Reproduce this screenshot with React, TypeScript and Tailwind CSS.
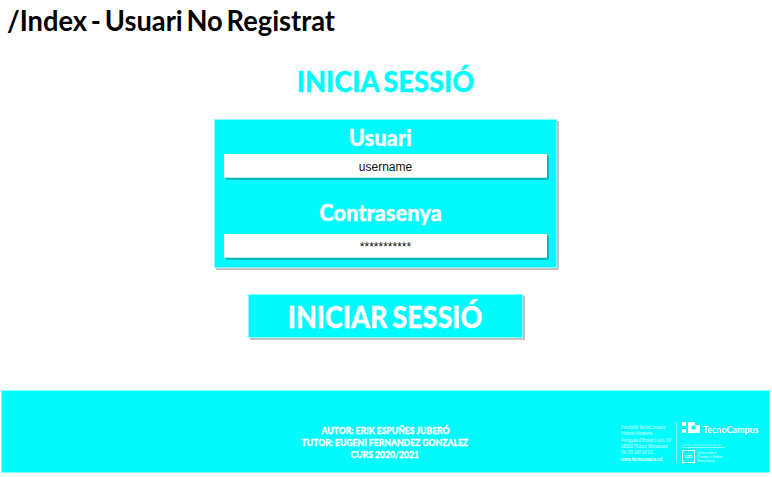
import React from "react";

const display = "block whitespace-nowrap font-['Lato',sans-serif]";

type FieldProps = { label: string; value: string; labelClass: string };

function Field({ label, value, labelClass }: FieldProps) {
  return (
    <div className="flex flex-col items-center">
      <label className={`${display} -ml-[10px] text-[23px] font-black text-white [-webkit-text-stroke:0.3px_white] ${labelClass}`}>{label}</label>
      <div className="flex h-6 w-[323px] justify-center border-b border-[#b0f0f2] bg-white text-[#111] shadow-[2px_2px_0_#00b9bd]">
        <span className="font-['Liberation_Sans',Arial,sans-serif] text-[12px] leading-[26px]">{value}</span>
      </div>
    </div>
  );
}

function TecnoCampus() {
  return (
    <div className="flex h-[41px] w-[140px] font-['Lato',sans-serif] text-white">
      <div className="w-[56px] shrink-0 border-r border-white/40 pt-[2px] text-[5px] leading-[6px] whitespace-nowrap text-white/80">
        <div className="flex origin-left scale-x-[.82] flex-col">
          <span className="tracking-[0.1px]">Fundació TecnoCampus</span>
          <span>Mataró-Maresme</span>
          <span className="mt-[1px]">Avinguda d'Ernest Lluch, 32</span>
          <span>08302 Mataró (Barcelona)</span>
          <span>Tel. 93 169 65 01</span>
          <span className="mt-[1px] font-bold text-white">www.tecnocampus.cat</span>
        </div>
      </div>
      <div className="ml-[5px] flex flex-col">
        <div className="flex h-[12px] items-start">
          <svg width="18" height="11" viewBox="0 0 18 11" fill="white">
            <path fillRule="evenodd" d="M0 0h4v4H0zM0 7h4v4H0zM6 0h7v3h5v8H6zM9.5 3.5v4h4v-4z" />
          </svg>
          <span className="ml-[3px] origin-left scale-x-[.94] text-[9.5px] leading-[16px] font-bold">TecnoCampus</span>
        </div>
        <div className="mt-[9px] h-[5px] w-[43px] border-b border-white/50 text-[3px] leading-[4px] whitespace-nowrap text-white/60">Centre universitari adscrit a la</div>
        <div className="mt-[2px] flex gap-[2px]">
          <div className="flex h-[13px] w-[13px] items-center justify-center border border-white text-[5px]">upf.</div>
          <div className="pt-[1px] text-[4px] leading-[4px] text-white/80">Universitat<br />Pompeu Fabra<br />Barcelona</div>
        </div>
      </div>
    </div>
  );
}

export default function App() {
  return (
    <main className="flex h-[477px] w-[772px] flex-col overflow-hidden bg-white">
      <h1 className={`${display} ml-[7px] h-[61px] text-[29px] leading-[40px] font-bold text-black`}><span className="inline-block origin-left scale-x-[.94] [word-spacing:-3px]">/Index - Usuari No Registrat</span></h1>
      <h2 className={`${display} h-[58px] self-center text-[29px] leading-[39px] font-black text-[#00fbff]`}><span className="inline-block scale-x-[.94] [word-spacing:-2px] [-webkit-text-stroke:0.3px_#00fbff]">INICIA SESSIÓ</span></h2>
      <section className="ml-[214px] flex h-[149px] w-[343px] flex-col border border-[#80fdff] bg-[#00fbff] shadow-[2px_2px_0_#c0c0c0]">
        <Field label="Usuari" value="username" labelClass="h-[34px] leading-[35px] scale-x-[.95]" />
        <Field label="Contrasenya" value="***********" labelClass="h-[56px] pt-[20px] leading-[28px] scale-x-[.95]" />
      </section>
      <button className={`${display} mt-[26px] ml-[248px] h-[44px] w-[275px] border border-[#80fdff] bg-[#00fbff] text-[30px] leading-[39px] font-black text-white shadow-[2px_2px_0_#c0c0c0]`}>
        <span className="inline-block scale-x-[.9] [word-spacing:-2px] [-webkit-text-stroke:0.3px_white]">INICIAR SESSIÓ</span>
      </button>
      <footer className="mt-[52px] ml-[1px] flex h-[83px] w-[769px] border border-[#80fdff] bg-[#00fbff]">
        <div className="ml-[283px] w-[200px] shrink-0 pt-[33px] text-center font-['Lato',sans-serif] text-[10px] leading-[12px] font-black whitespace-nowrap text-white">
          <p><span className="inline-block scale-x-[.86] [-webkit-text-stroke:0.3px_white]">AUTOR: ERIK ESPUÑES JUBERÓ</span></p>
          <p><span className="inline-block scale-x-[.86] [-webkit-text-stroke:0.3px_white]">TUTOR: EUGENI FERNANDEZ GONZALEZ</span></p>
          <p><span className="inline-block scale-x-[.86] [-webkit-text-stroke:0.3px_white]">CURS 2020/2021</span></p>
        </div>
        <div className="mt-[31px] ml-[136px] shrink-0"><TecnoCampus /></div>
      </footer>
    </main>
  );
}
